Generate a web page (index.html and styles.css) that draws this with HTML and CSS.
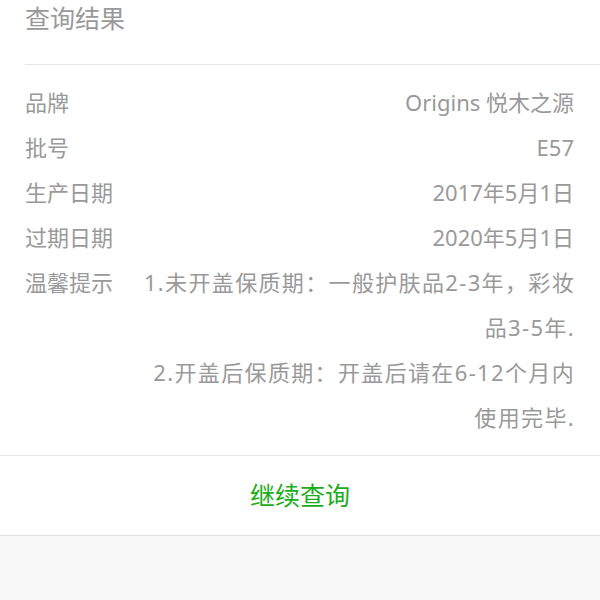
FILE: index.html
```html
<!DOCTYPE html>
<html lang="zh-CN">
<head>
<meta charset="utf-8">
<link rel="stylesheet" href="styles.css">
</head>
<body>
<div class="page">
  <div class="card">
    <div class="header">查询结果</div>
    <div class="list">
      <div class="row"><div class="label">品牌</div><div class="value">Origins 悦木之源</div></div>
      <div class="row"><div class="label">批号</div><div class="value">E57</div></div>
      <div class="row"><div class="label">生产日期</div><div class="value">2017年5月1日</div></div>
      <div class="row"><div class="label">过期日期</div><div class="value">2020年5月1日</div></div>
      <div class="row"><div class="label">温馨提示</div><div class="value tips"><p>1.未开盖保质期：一般护肤品2-3年，彩妆品3-5年.</p><p>2.开盖后保质期：开盖后请在6-12个月内使用完毕.</p></div></div>
    </div>
    <div class="action">继续查询</div>
  </div>
</div>
</body>
</html>
```
FILE: styles.css
```css
html, body {
  margin: 0;
  padding: 0;
  background: #f8f8f8;
  font-family: "Noto Sans", "Noto Sans CJK SC", sans-serif;
}
.page {
  width: 600px;
  height: 600px;
  background: #f8f8f8;
}
.card {
  background: #fff;
  border-bottom: 1px solid #e0e0e0;
}
.header {
  margin-left: 25px;
  height: 65px;
  line-height: 36px;
  font-size: 25px;
  color: #999;
  border-bottom: 1px solid #e5e5e5;
  box-sizing: border-box;
}
.list {
  padding: 15px 26px 15px 25px;
  border-bottom: 1px solid #e5e5e5;
}
.row {
  display: flex;
  justify-content: space-between;
  font-size: 22px;
  line-height: 45px;
  color: #999;
}
.label {
  flex: none;
  width: 92px;
}
.value {
  flex: 0 1 436px;
  text-align: right;
}
.tips {
  flex-basis: 438px;
  letter-spacing: 1.35px;
  margin-right: -1px;
}
.tips p {
  margin: 0;
}
.action {
  height: 79px;
  line-height: 79px;
  text-align: center;
  font-size: 25px;
  color: #1aad19;
}
```
